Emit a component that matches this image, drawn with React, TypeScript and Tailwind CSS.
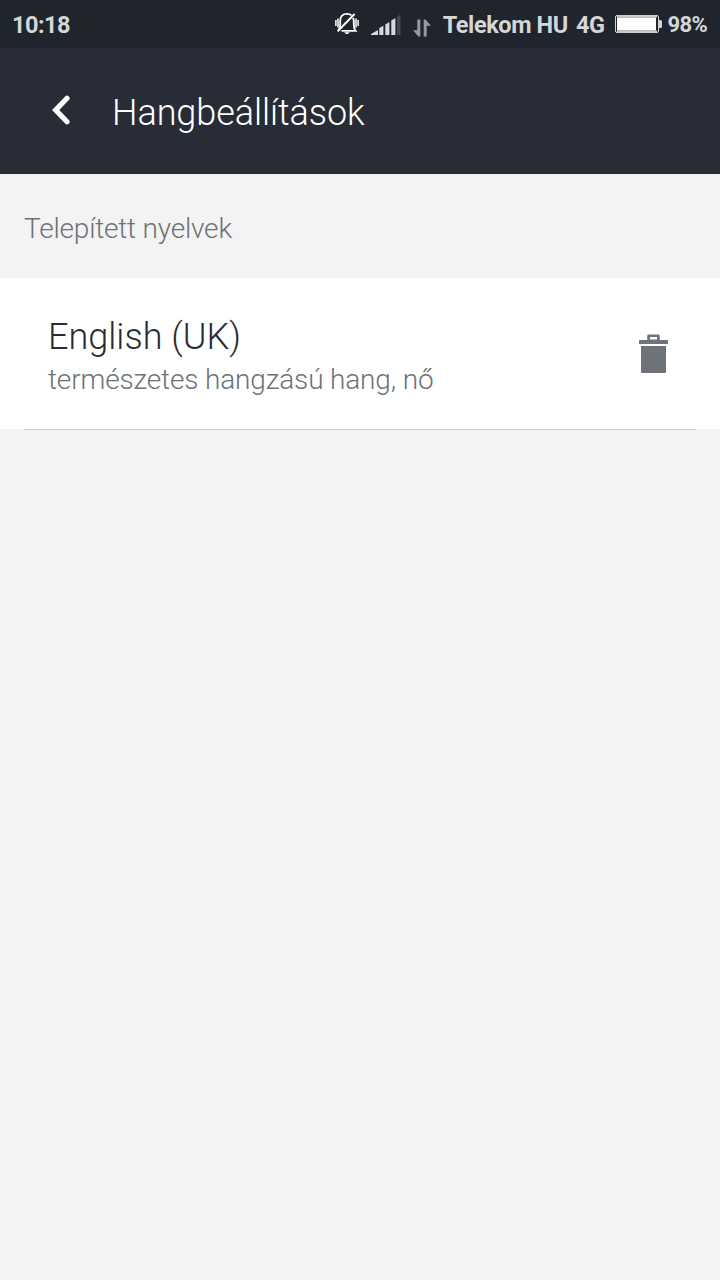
function SilentIcon() {
  return (
    <svg width="24" height="24" viewBox="0 0 24 24" fill="none" stroke="#fff" strokeWidth="1.9" className="shrink-0">
      <path d="M3.5 19.2 C5 17.5 5.2 15.8 5.2 13.5 V9.5 C5.2 5.5 7.8 2.9 12 2.9 C14 2.9 15.4 3.4 16.5 4.4" />
      <path d="M18 7 C18.6 8.2 18.8 9 18.8 10 V13.5 C18.8 16.5 19.2 18.2 20.5 19.9 H6.5" />
      <path d="M2.7 20.3 L19.6 3" strokeWidth="2" />
      <path d="M9 21.2 H15 L12.8 23 H11.2 Z" fill="#fff" stroke="none" />
      <path d="M.9 9 V15 M3 7.5 V16.5 M21 7.5 V16.5 M23.1 9 V15" strokeWidth="1.5" />
    </svg>
  )
}

function SignalIcon() {
  return (
    <svg width="30" height="21" viewBox="0 0 30 21" fill="#d8d9da" className="shrink-0">
      <path d="M0 21 V20 L7 16 V21 Z" />
      <path d="M8.3 21 V14 L12.4 11.7 V21 Z" />
      <path d="M14.3 21 V10.5 L18.4 8 V21 Z" />
      <path d="M20.3 21 V6.5 L24.4 4 V21 Z" />
      <path d="M26 21 V2.8 L29.5 .5 V21 Z" fill="#45484f" />
    </svg>
  )
}

function DataIcon() {
  return (
    <svg width="18" height="18" viewBox="0 0 18 18" fill="#97999c" className="shrink-0">
      <path d="M4.3 .5 H7.3 V17.5 H5.5 L0 11.2 H4.3 Z" />
      <path d="M10.7 17.5 V.5 H12.5 L18 6.8 H13.7 V17.5 Z" />
    </svg>
  )
}

function BatteryIcon() {
  return (
    <svg width="47" height="18" viewBox="0 0 47 18" className="shrink-0">
      <rect x=".5" y=".5" width="43" height="17" rx="1.5" fill="none" stroke="#d3d3d3" />
      <path d="M2 1.5 H42 M2 16.5 H42" stroke="#c8c8c8" strokeWidth="2" />
      <rect x="2" y="2.5" width="39" height="13" fill="#fff" />
      <path d="M44 5 H45.5 Q47 5 47 6.5 V11.5 Q47 13 45.5 13 H44 Z" fill="#d3d3d3" />
    </svg>
  )
}

function BackIcon() {
  return (
    <svg width="20" height="30" viewBox="0 0 20 30" fill="none" className="shrink-0">
      <path d="M16 3.3 L4.7 15 L16 26.7" stroke="#fff" strokeWidth="5.2" strokeLinecap="round" strokeLinejoin="miter" />
    </svg>
  )
}

function TrashIcon() {
  return (
    <svg width="29" height="39" viewBox="0 0 29 39" fill="#6e7379">
      <path fillRule="evenodd" d="M8.2 6 V1.7 Q8.2 .5 9.4 .5 H19.5 Q20.7 .5 20.7 1.7 V6 H28 Q29 6 29 7 V10 H0 V7 Q0 6 1 6 Z M11 3 V5.6 H18 V3 Z" />
      <path d="M2 12 H27 V37.7 Q27 39 25.7 39 H3.3 Q2 39 2 37.7 Z" />
    </svg>
  )
}

function StatusBar() {
  return (
    <div className="flex h-12 items-start bg-[#20242d] pl-3 text-[23.5px] leading-[28px] font-bold tracking-[-0.4px] whitespace-nowrap text-[#d5d6d7]">
      <span className="mt-[11px] tracking-[-0.5px]">10:18</span>
      <div className="ml-auto flex items-start pr-[13px]">
        <span className="mt-[11px]">
          <SilentIcon />
        </span>
        <span className="mt-[14px] ml-3">
          <SignalIcon />
        </span>
        <span className="mt-[19px] ml-3">
          <DataIcon />
        </span>
        <span className="mt-[11px] ml-3">Telekom HU</span>
        <span className="mt-[11px] ml-2">4G</span>
        <span className="mt-[15px] ml-2.5">
          <BatteryIcon />
        </span>
        <span className="mt-[11px] ml-1.5 text-[22px] tracking-[-0.7px]">98%</span>
      </div>
    </div>
  )
}

export default function App() {
  return (
    <div className="min-h-screen bg-[#f3f3f3] font-[Roboto,sans-serif]">
      <StatusBar />

      {/* Header */}
      <header className="flex h-[126px] items-center bg-[#282c37] pl-[51px]">
        <button aria-label="Vissza" className="mb-0.5">
          <BackIcon />
        </button>
        <h1 className="mt-1 ml-[41px] text-4xl leading-[42px] font-light tracking-[-0.07px] text-white">
          Hangbeállítások
        </h1>
      </header>

      <h2 className="flex h-[104px] items-center px-6 pt-[5px] text-[28px] font-light tracking-[-0.2px] text-[#6d7277]">
        Telepített nyelvek
      </h2>

      {/* Installed voice */}
      <div className="flex h-[151px] items-center justify-between bg-white pr-[52px] pl-12">
        <div className="pt-[7px]">
          <div className="text-4xl leading-[42px] font-light text-[#282c37]">English (UK)</div>
          <div className="mt-[3px] text-[28px] leading-[38px] font-light tracking-[-0.15px] text-[#6d7277]">
            természetes hangzású hang, nő
          </div>
        </div>
        <button aria-label="Törlés">
          <TrashIcon />
        </button>
      </div>
      <div className="mx-6 h-px bg-[#cfd0d2]" />
    </div>
  )
}
